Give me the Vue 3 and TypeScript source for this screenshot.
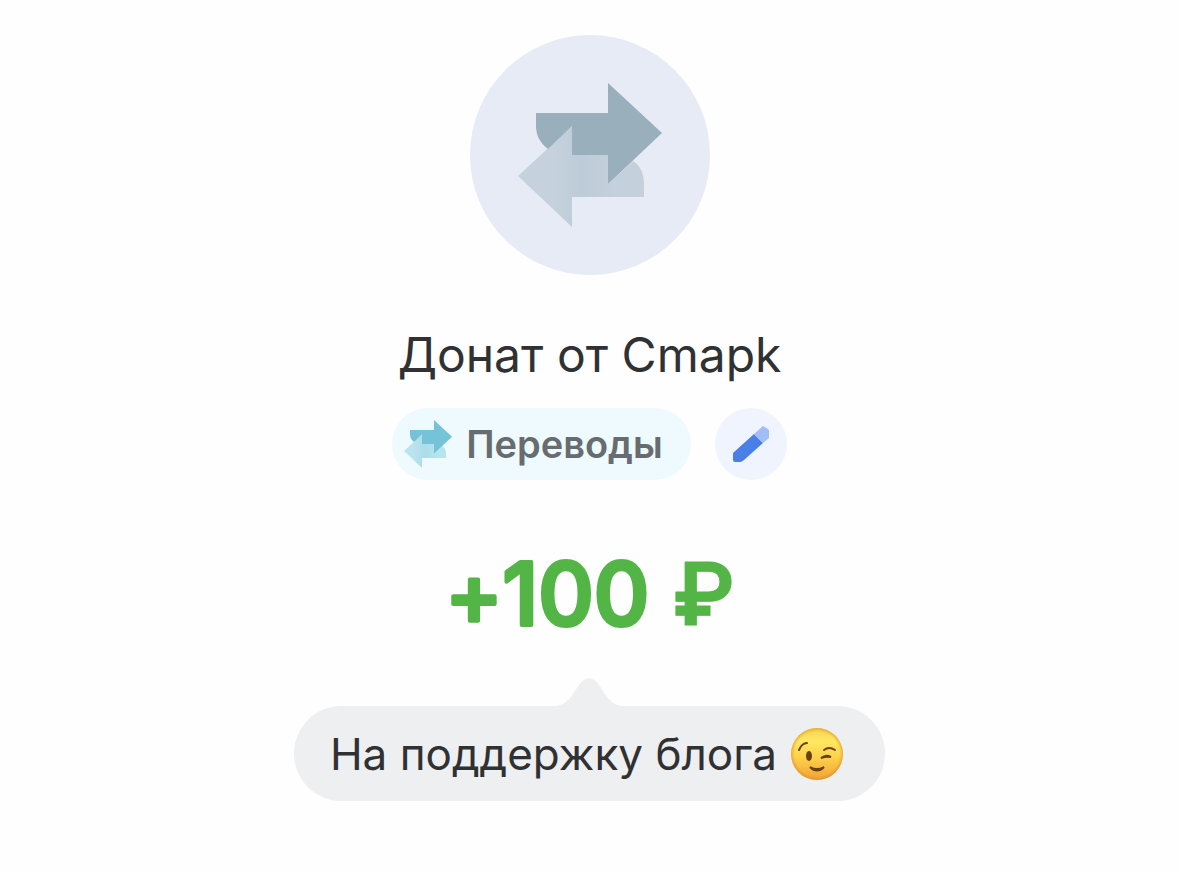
<script setup lang="ts">
import { ref } from 'vue'

interface Transfer {
  title: string
  category: string
  amount: string
  currency: string
  message: string
}

const transfer = ref<Transfer>({
  title: 'Донат от Cmapk',
  category: 'Переводы',
  amount: '+100',
  currency: '₽',
  message: 'На поддержку блога',
})

const arrowRight = 'M18 30H90V0L144 50L90 101V72H54V43L30 66C22 60 18 52 18 43Z'
const arrowLeft = 'M0 93L54 43V72H90V101L115 78C122 82 126 90 126 101V114H54V144Z'
</script>

<template>
  <main class="operation">
    <div class="avatar">
      <svg class="avatar-icon" viewBox="0 0 144 144" aria-hidden="true">
        <defs>
          <linearGradient id="avatarShade" x1="0" x2="1" y1="0" y2="0">
            <stop offset="0.3" stop-color="#c5d2de" />
            <stop offset="0.5" stop-color="#bccbd7" />
            <stop offset="0.75" stop-color="#c4d1dc" />
          </linearGradient>
        </defs>
        <path :d="arrowLeft" fill="url(#avatarShade)" />
        <path :d="arrowRight" fill="#9aafbc" />
      </svg>
    </div>

    <h1 class="title">{{ transfer.title }}</h1>

    <div class="category">
      <button class="chip" type="button">
        <svg class="chip-icon" viewBox="0 0 144 144" aria-hidden="true">
          <defs>
            <linearGradient id="chipShade" x1="0" x2="1" y1="0" y2="0">
              <stop offset="0.2" stop-color="#bce4ee" />
              <stop offset="0.5" stop-color="#abdce9" />
              <stop offset="0.8" stop-color="#b8e4ee" />
            </linearGradient>
          </defs>
          <path :d="arrowLeft" fill="url(#chipShade)" />
          <path :d="arrowRight" fill="#74c3d8" />
        </svg>
        <span>{{ transfer.category }}</span>
      </button>
      <button class="edit" type="button" aria-label="Изменить категорию">
        <svg class="edit-icon" viewBox="0 0 36 36" aria-hidden="true">
          <path d="M0 27L21 8L30 17L11 34Q9 36 7 36H2Q0 36 0 34Z" fill="#4b7fe8" />
          <path d="M21 8L30 0L35 3Q39 8 36 12L30 17Z" fill="#a2bdf5" />
        </svg>
      </button>
    </div>

    <svg class="amount" viewBox="0 0 320 100" role="img" :aria-label="`${transfer.amount} ${transfer.currency}`">
      <text x="160" y="80" text-anchor="middle">{{ transfer.amount }}&nbsp;<tspan class="currency">{{ transfer.currency }}</tspan></text>
    </svg>

    <div class="message">
      <svg class="tail" viewBox="0 0 68 28" aria-hidden="true">
        <path d="M0 28C13 27 17 17 24 7C30 -2 38 -2 44 7C51 17 55 27 68 28Z" fill="#eeeff1" />
      </svg>
      <p class="bubble">
        <span>{{ transfer.message }}</span>
        <svg class="wink" viewBox="0 0 52 52" role="img" aria-label="😉">
          <defs>
            <linearGradient id="face" x1="0" x2="0" y1="0" y2="1">
              <stop offset="0" stop-color="#f6d24c" />
              <stop offset="0.25" stop-color="#fde862" />
              <stop offset="0.55" stop-color="#fdd34b" />
              <stop offset="1" stop-color="#f0a238" />
            </linearGradient>
            <radialGradient id="rim">
              <stop offset="0.86" stop-color="#d98a1e" stop-opacity="0" />
              <stop offset="1" stop-color="#d98a1e" stop-opacity="0.55" />
            </radialGradient>
          </defs>
          <circle cx="26" cy="26" r="26" fill="url(#face)" />
          <circle cx="26" cy="26" r="26" fill="url(#rim)" />
          <ellipse cx="18" cy="28" rx="3" ry="5" fill="#694010" />
          <g fill="none" stroke="#694010" stroke-linecap="round" stroke-width="2">
            <path d="M8 22Q11 15 16 15" />
            <path d="M33 22Q38 18 44 22" />
            <path d="M30 30Q35 26 40 29Q36 28 30 30Z" />
            <path d="M19 39Q26 46 33 39Q26 43 19 39Z" />
          </g>
        </svg>
      </p>
    </div>
  </main>
</template>

<style>
body {
  margin: 0;
  background: #fefefe;
}
</style>

<style scoped>
.operation {
  box-sizing: border-box;
  min-height: 100vh;
  padding: 35px 24px;
  display: flex;
  flex-direction: column;
  align-items: center;
  font-family: Inter, "Liberation Sans", sans-serif;
  color: #303133;
}

.avatar {
  width: 240px;
  height: 240px;
  border-radius: 50%;
  background: #e6ebf5;
  display: flex;
  align-items: center;
  justify-content: center;
}

.avatar-icon {
  width: 144px;
  height: 144px;
}

.title {
  margin: 50px 0 0;
  font-size: 48px;
  line-height: 60px;
  font-weight: 400;
  text-align: center;
}

.category {
  margin-top: 23px;
  display: flex;
  gap: 24px;
}

.chip,
.edit {
  height: 72px;
  border: 0;
  font: inherit;
  cursor: pointer;
  display: flex;
  align-items: center;
}

.chip {
  padding: 0 28px 0 12px;
  gap: 14px;
  border-radius: 36px;
  background: #eefafd;
  color: #676c70;
  font-size: 38px;
  font-weight: 600;
}

.chip-icon {
  width: 48px;
  height: 48px;
}

.edit {
  width: 72px;
  padding: 0;
  justify-content: center;
  border-radius: 50%;
  background: #f0f4ff;
}

.edit-icon {
  width: 36px;
  height: 36px;
}

.amount {
  width: 320px;
  height: 100px;
  margin-top: 65px;
  overflow: visible;
}

.amount text {
  font-size: 86px;
  font-weight: 500;
  font-feature-settings: "calt" 0;
  fill: #52b545;
  stroke: #52b545;
  stroke-width: 4px;
  stroke-linejoin: round;
}

.amount .currency {
  font-weight: 600;
  stroke-width: 1px;
}

.message {
  margin-top: 33px;
  display: flex;
  flex-direction: column;
  align-items: center;
}

.tail {
  display: block;
  width: 68px;
  height: 28px;
}

.bubble {
  margin: 0;
  min-height: 95px;
  box-sizing: border-box;
  padding: 0 42px 0 36px;
  border-radius: 48px;
  background: #eeeff1;
  display: flex;
  align-items: center;
  gap: 14px;
  font-size: 44px;
  line-height: 54px;
}

.wink {
  width: 52px;
  height: 52px;
  flex: none;
}
</style>
